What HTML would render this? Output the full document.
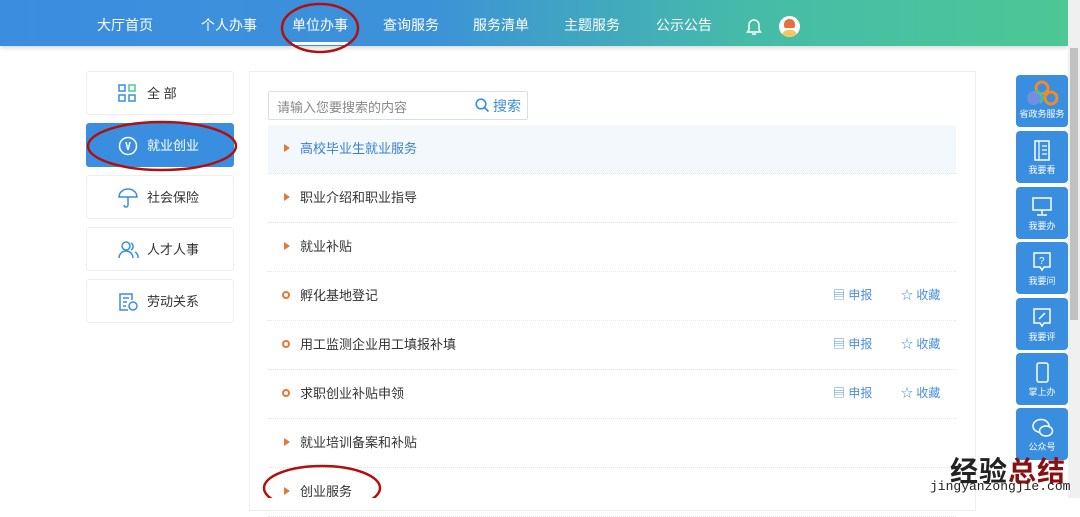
<!DOCTYPE html>
<html><head><meta charset="utf-8"><style>
*{margin:0;padding:0;box-sizing:border-box}
body{width:1080px;height:498px;overflow:hidden;background:#fff;font-family:"Liberation Sans","Noto Sans CJK SC",sans-serif;position:relative}
.hdr{position:absolute;left:0;top:0;width:1068px;height:46px;background:linear-gradient(90deg,#3b8de0 0%,#3c92d8 40%,#46bba8 70%,#4dc796 100%);box-shadow:0 2px 4px rgba(0,0,0,.15)}
.hdr span{position:absolute;top:15px;color:#fff;font-size:14px}
.sb{position:absolute;right:0;top:0;width:12px;height:498px;background:#f0f0f0}
.sb i{position:absolute;left:2px;top:48px;width:8px;height:272px;background:#c1c1c1}
.lm{position:absolute;left:86px;width:148px;height:44px;border:1px solid #eee;border-radius:3px;font-size:13px;color:#333}
.lm b{position:absolute;left:60px;top:11px;font-weight:normal}
.lm svg{position:absolute;left:31px;top:12px}
.panel{position:absolute;left:249px;top:71px;width:727px;height:440px;border:1px solid #eee}
.search{position:absolute;left:268px;top:91px;width:260px;height:29px;border:1px solid #ddd;border-radius:2px;font-size:13px;color:#888}
.row{position:absolute;left:268px;width:688px;height:49px;border-bottom:1px dotted #e4e4e4;font-size:13px;color:#333}
.row .t{position:absolute;left:32px;top:13px}
.tri{position:absolute;left:16px;top:19px;width:0;height:0;border-left:6px solid #e8763a;border-top:4px solid transparent;border-bottom:4px solid transparent}
.dot{position:absolute;left:14px;top:19px;width:8px;height:8px;border:2px solid #e8763a;border-radius:50%}
.act{position:absolute;top:14px;font-size:12px;color:#4a8fd4}
.rb{position:absolute;left:1016px;width:52px;height:52px;background:#3a8ee0;border-radius:4px;color:#fff;font-size:9px;text-align:center}
.rb div{position:absolute;bottom:7px;width:100%}
.rb svg{position:absolute;left:16px;top:9px}
</style></head><body>
<div class="hdr">
<span style="left:97px">大厅首页</span><span style="left:201px">个人办事</span><span style="left:292px">单位办事</span><span style="left:383px">查询服务</span><span style="left:473px">服务清单</span><span style="left:564px">主题服务</span><span style="left:656px">公示公告</span>
<div style="position:absolute;left:292px;top:42px;width:56px;height:3px;background:#fff"></div>
<svg style="position:absolute;left:746px;top:17px" width="16" height="18" viewBox="0 0 16 18"><path d="M3 13V8a5 5 0 0110 0v5l1.5 2h-13zM6.5 16a1.5 1.5 0 003 0" fill="none" stroke="#fff" stroke-width="1.5"/></svg>
<div style="position:absolute;left:779px;top:16px;width:21px;height:21px;border-radius:50%;background:#fff;overflow:hidden"><div style="position:absolute;left:5px;top:3px;width:11px;height:9px;background:#e5723e;border-radius:5px 5px 2px 2px"></div><div style="position:absolute;left:3px;top:14px;width:15px;height:8px;background:#f0c860;border-radius:6px 6px 0 0"></div></div>
</div>
<div class="sb"><i></i></div>

<div class="lm" style="top:71px"><svg width="18" height="18"><rect x="1" y="1" width="6" height="6" fill="none" stroke="#3a8ee0" stroke-width="1.5"/><rect x="11" y="1" width="6" height="6" fill="none" stroke="#4dc796" stroke-width="1.5"/><rect x="1" y="11" width="6" height="6" fill="none" stroke="#3a8ee0" stroke-width="1.5"/><rect x="11" y="11" width="6" height="6" fill="none" stroke="#3a8ee0" stroke-width="1.5"/></svg><b>全 部</b></div>
<div class="lm" style="top:123px;background:#3a8ee0;border-color:#3a8ee0;color:#fff"><svg width="20" height="20"><circle cx="10" cy="10" r="8.5" fill="none" stroke="#fff" stroke-width="1.5"/><path d="M8 6l2 8 2-8" fill="none" stroke="#fff" stroke-width="1.5"/></svg><b>就业创业</b></div>
<div class="lm" style="top:175px"><svg width="20" height="20"><path d="M1 9a9 8 0 0118 0zM10 9v8a2 2 0 01-4 0" fill="none" stroke="#3a8ee0" stroke-width="1.5"/></svg><b>社会保险</b></div>
<div class="lm" style="top:227px"><svg width="22" height="20"><circle cx="8" cy="6" r="4" fill="none" stroke="#3a8ee0" stroke-width="1.5"/><path d="M1 18a7 7 0 0114 0M13 3a4 4 0 010 7M17 12a6 6 0 013 6" fill="none" stroke="#3a8ee0" stroke-width="1.5"/></svg><b>人才人事</b></div>
<div class="lm" style="top:279px"><svg width="20" height="20"><path d="M14 8V2H2v16h8M5 6h6M5 10h4M5 14h3" fill="none" stroke="#3a8ee0" stroke-width="1.5"/><circle cx="15" cy="14" r="4" fill="none" stroke="#3a8ee0" stroke-width="1.5"/></svg><b>劳动关系</b></div>

<div class="panel"></div>
<div class="search"><span style="position:absolute;left:8px;top:5px">请输入您要搜索的内容</span><svg style="position:absolute;left:206px;top:6px" width="15" height="15"><circle cx="6" cy="6" r="4.8" fill="none" stroke="#3a8ee0" stroke-width="1.6"/><path d="M9.5 9.5l4 4" stroke="#3a8ee0" stroke-width="1.8"/></svg><span style="position:absolute;left:224px;top:4px;color:#3a8ee0;font-size:14px">搜索</span></div>

<div class="row" style="top:125px;background:#f3f8fc"><i class="tri"></i><span class="t" style="color:#3a7fcf">高校毕业生就业服务</span></div>
<div class="row" style="top:174px"><i class="tri"></i><span class="t">职业介绍和职业指导</span></div>
<div class="row" style="top:223px"><i class="tri"></i><span class="t">就业补贴</span></div>
<div class="row" style="top:272px"><i class="dot"></i><span class="t">孵化基地登记</span><span class="act" style="left:565px">▤ 申报</span><span class="act" style="left:633px">☆ 收藏</span></div>
<div class="row" style="top:321px"><i class="dot"></i><span class="t">用工监测企业用工填报补填</span><span class="act" style="left:565px">▤ 申报</span><span class="act" style="left:633px">☆ 收藏</span></div>
<div class="row" style="top:370px"><i class="dot"></i><span class="t">求职创业补贴申领</span><span class="act" style="left:565px">▤ 申报</span><span class="act" style="left:633px">☆ 收藏</span></div>
<div class="row" style="top:419px"><i class="tri"></i><span class="t">就业培训备案和补贴</span></div>
<div class="row" style="top:468px"><i class="tri"></i><span class="t">创业服务</span></div>

<div class="rb" style="top:75px"><svg style="left:8px;top:4px" width="36" height="30"><circle cx="10" cy="19" r="7" fill="#6f8fe0"/><circle cx="18" cy="9" r="6" fill="none" stroke="#f08a2a" stroke-width="3"/><circle cx="27" cy="19" r="6" fill="none" stroke="#f08a2a" stroke-width="3"/><path d="M12 12c6 2 8 8 4 12" stroke="#3fc0a0" stroke-width="3" fill="none"/></svg><div>省政务服务</div></div>
<div class="rb" style="top:131px"><svg width="20" height="22"><rect x="3" y="1" width="14" height="19" fill="none" stroke="#fff" stroke-width="1.5"/><path d="M7 1v19M10 6h5M10 10h5M10 14h5" stroke="#fff" stroke-width="1.2"/></svg><div>我要看</div></div>
<div class="rb" style="top:187px"><svg width="20" height="22"><rect x="1" y="2" width="18" height="12" fill="none" stroke="#fff" stroke-width="1.5"/><path d="M10 14v4M5 19h10" stroke="#fff" stroke-width="1.5"/></svg><div>我要办</div></div>
<div class="rb" style="top:242px"><svg width="20" height="22"><path d="M2 2h16v14h-6l-2 3-2-3H2z" fill="none" stroke="#fff" stroke-width="1.5"/><text x="7" y="13" fill="#fff" font-size="10">?</text></svg><div>我要问</div></div>
<div class="rb" style="top:298px"><svg width="20" height="22"><path d="M2 2h16v14h-6l-2 3-2-3H2z" fill="none" stroke="#fff" stroke-width="1.5"/><path d="M7 12l6-6" stroke="#fff" stroke-width="1.5"/></svg><div>我要评</div></div>
<div class="rb" style="top:353px"><svg width="20" height="22"><rect x="5" y="1" width="11" height="19" rx="2" fill="none" stroke="#fff" stroke-width="1.5"/></svg><div>掌上办</div></div>
<div class="rb" style="top:408px"><svg width="22" height="22"><ellipse cx="9" cy="9" rx="8" ry="6.5" fill="none" stroke="#fff" stroke-width="1.5"/><ellipse cx="14" cy="14" rx="6.5" ry="5" fill="#3a8ee0" stroke="#fff" stroke-width="1.5"/></svg><div>公众号</div></div>

<svg style="position:absolute;left:0;top:0" width="1080" height="498">
<ellipse cx="320" cy="28" rx="38" ry="24" fill="none" stroke="#b01010" stroke-width="2.5"/>
<ellipse cx="162" cy="146" rx="74" ry="24" fill="none" stroke="#b01010" stroke-width="2.5"/>
<ellipse cx="322" cy="488" rx="58" ry="22" fill="none" stroke="#b01010" stroke-width="2.5"/>
</svg>
<div style="position:absolute;left:950px;top:450px;font-size:28px;font-weight:bold;color:#222;letter-spacing:1px">经验<span style="color:#8a1010">总结</span></div>
<div style="position:absolute;left:930px;top:479px;font-size:13px;color:#222;font-family:'Liberation Mono',monospace">jingyanzongjie.com</div>
</body></html>
